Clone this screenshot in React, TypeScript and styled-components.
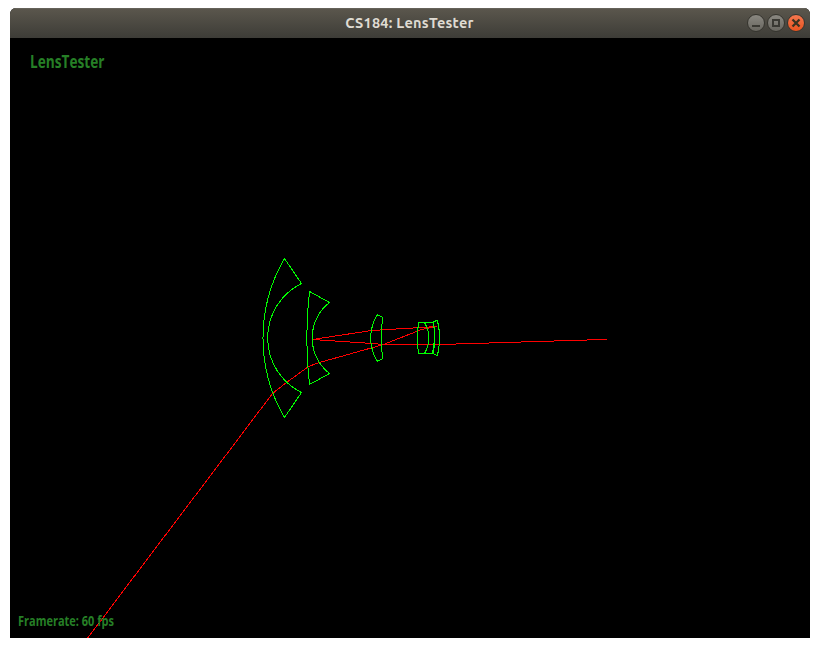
import React from 'react';
import styled, { createGlobalStyle } from 'styled-components';

const GlobalStyle = createGlobalStyle`
  * { box-sizing: border-box; }
  html, body { margin: 0; background: #fff; }
`;

const Desktop = styled.main`
  width: 820px;
  height: 648px;
  padding: 8px 10px 10px;
  background: #fff;
`;

const Window = styled.section`
  display: flex;
  flex-direction: column;
  height: 630px;
  border-radius: 6px 6px 0 0;
  overflow: hidden;
  background: #000;
`;

const TitleBar = styled.header`
  display: grid;
  grid-template-columns: 1fr auto 1fr;
  align-items: center;
  height: 30px;
  flex: none;
  padding-right: 5px;
  background: linear-gradient(#5b574d, #3d3c37);
  box-shadow: inset 0 1px #65625a;
`;

const Title = styled.h1`
  grid-column: 2;
  margin: 0;
  padding-left: 4px;
  font: 700 14.5px/30px Ubuntu, 'Noto Sans', sans-serif;
  letter-spacing: 0.25px;
  color: #dfdbd2;
  white-space: nowrap;
`;

const Controls = styled.div`
  display: flex;
  justify-content: flex-end;
  gap: 2px;
`;

const Control = styled.button<{ $close?: boolean }>`
  width: 18px;
  height: 18px;
  padding: 0;
  border: 1px solid #36352f;
  border-radius: 50%;
  background: ${(p) => (p.$close ? 'linear-gradient(#f4774f, #e9541f)' : 'linear-gradient(#8a8881, #68665f)')};

  svg { display: block; }
`;

const Viewport = styled.div`
  display: grid;
  height: 600px;
  background: #000;

  > * { grid-area: 1 / 1; }
`;

const Scene = styled.svg`
  display: block;
  width: 800px;
  height: 600px;
  fill: none;
  stroke-width: 1;
  shape-rendering: crispEdges;
`;

const Overlay = styled.div`
  display: flex;
  flex-direction: column;
  justify-content: space-between;
  align-items: flex-start;
  padding: 10px 8px 7px;
`;

const Label = styled.span<{ $size: number; $indent?: number; $scale: number }>`
  margin-left: ${(p) => p.$indent ?? 0}px;
  font: 700 ${(p) => p.$size}px/1.5 'Open Sans', sans-serif;
  color: #267f26;
  white-space: nowrap;
  transform: scaleX(${(p) => p.$scale});
  transform-origin: left;
`;

const lenses = [
  'M284.5 258.5 L301.5 283.5 A60.8 60.8 0 0 0 301.5 392.5 L284.5 417.5 A157.7 157.7 0 0 1 284.5 258.5',
  'M309.5 291.5 L329.5 302.5 A45 45 0 0 0 329.5 373.5 L309.5 384.5 A402 402 0 0 1 309.5 291.5',
  'M377.5 314.5 L382.5 317.5 Q380.5 338 382.5 358.5 L377.5 361.5 A44 44 0 0 1 377.5 314.5',
  'M418.5 322.5 H433.5 Q435.5 338 433.5 353.5 H418.5 Q416.5 338 418.5 322.5',
  'M424.5 322.5 Q433.5 338 424.5 353.5',
  'M433.5 321.5 L437.5 320.5 Q441.5 338 437.5 355.5 L432.5 353.5 Q435.9 338 433.5 321.5',
];

const rays = [
  'M86.9 639 L272.5 393.5 L286.5 382.5 L308.5 366.5 L319.5 362.5 L383.5 344.5 L421.5 329.5 L437.5 326.5',
  'M437.5 326.5 L371.5 330.5 L312.5 339.5 L372.5 343.5 L382.5 344.5 H439.5 L607 339.4',
];

export default function App() {
  return (
    <Desktop>
      <GlobalStyle />
      <Window>
        <TitleBar>
          <Title>CS184: LensTester</Title>
          <Controls>
            <Control aria-label="Minimize">
              <svg width="16" height="16"><path d="M4 11H12" stroke="#3a3933" strokeWidth="2" /></svg>
            </Control>
            <Control aria-label="Maximize">
              <svg width="16" height="16"><rect x="5" y="5" width="6" height="6" fill="none" stroke="#3a3933" strokeWidth="2" /></svg>
            </Control>
            <Control aria-label="Close" $close>
              <svg width="16" height="16"><path d="M4.5 4.5L11.5 11.5M11.5 4.5L4.5 11.5" stroke="#3a3320" strokeWidth="2.3" /></svg>
            </Control>
          </Controls>
        </TitleBar>
        <Viewport>
          <Overlay>
            <Label $size={18} $indent={12} $scale={0.758}>LensTester</Label>
            <Label $size={14} $scale={0.785}>Framerate: 60 fps</Label>
          </Overlay>
          <Scene viewBox="10 38 800 600">
            <g stroke="#f00">{rays.map((d) => <path key={d} d={d} />)}</g>
            <g stroke="#0f0">{lenses.map((d) => <path key={d} d={d} />)}</g>
          </Scene>
        </Viewport>
      </Window>
    </Desktop>
  );
}
